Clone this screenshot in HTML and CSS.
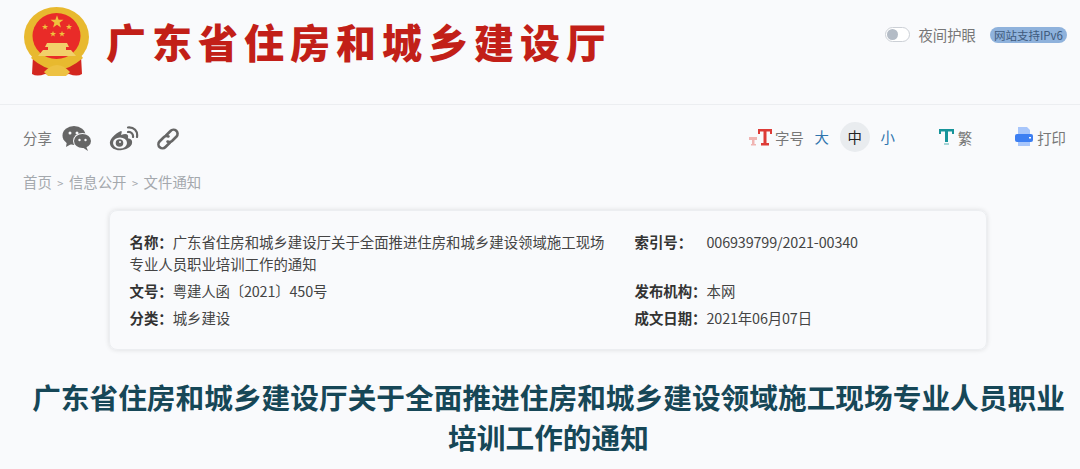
FILE: index.html
```html
<!DOCTYPE html>
<html lang="zh-CN">
<head>
    <meta charset="UTF-8">
    <title>广东省住房和城乡建设厅</title>
    <link rel="stylesheet" href="styles.css">
</head>
<body>

    <header class="site-header">
        <div class="brand">
            <!-- 国徽 -->
            <svg class="emblem" width="68" height="72" viewBox="0 0 68 72">
                <defs>
                    <path id="star" d="M0 -5 L1.200 -1.600 H4.800 L1.900 0.600 L2.900 4 L0 2 L-2.900 4 L-1.900 0.600 L-4.800 -1.600 H-1.200 Z"/>
                </defs>
                <path d="M10 50 L9 68 Q14 71 22 68 L34 70 L46 68 Q54 71 59 68 L58 50 Z" fill="#d3261f"/>
                <ellipse cx="33.500" cy="31" rx="32.500" ry="30" fill="#e8b92f"/>
                <ellipse cx="33.500" cy="30" rx="24" ry="23" fill="#e92b28"/>
                <g fill="#efc23d">
                    <use href="#star" transform="translate(34 16) scale(1.350)"/>
                    <use href="#star" transform="translate(22 21) scale(0.650)"/>
                    <use href="#star" transform="translate(46 21) scale(0.650)"/>
                    <use href="#star" transform="translate(30 28) scale(0.650)"/>
                    <use href="#star" transform="translate(39 28) scale(0.650)"/>
                </g>
                <path d="M24 37 H44 L46 41 H43 V44 H48 L53 50 H15 L20 44 H25 V41 H22 Z" fill="#f2d06a"/>
                <path d="M11 48 Q33 66 57 48 L60 52 Q46 64 34 64 Q22 64 8 52 Z" fill="#e8b92f"/>
                <path d="M21 66 Q34 52 47 66 L43 70 H25 Z" fill="#edc143"/>
            </svg>
            <div class="site-name">广东省住房和城乡建设厅</div>
        </div>
        <div class="header-tools">
            <span class="switch"><span class="switch-knob"></span></span>
            <span class="night-text">夜间护眼</span>
            <span class="ipv6">网站支持IPv6</span>
        </div>
    </header>

    <div class="tool-bar">
        <div class="share">
            <span class="share-label">分享</span>
            <svg class="share-icon" width="30" height="26" viewBox="0 0 30 26">
                <ellipse cx="12" cy="9.500" rx="11.500" ry="9.500" fill="#666"/>
                <path d="M5 15 L4 21 L11 17 Z" fill="#666"/>
                <ellipse cx="20.500" cy="15" rx="9.500" ry="8" fill="#f9fafc"/>
                <ellipse cx="20.500" cy="15" rx="8.500" ry="7" fill="#666"/>
                <path d="M24 20 L26 25 L20 21 Z" fill="#666"/>
                <circle cx="8" cy="7" r="1.500" fill="#f9fafc"/>
                <circle cx="15" cy="7" r="1.500" fill="#f9fafc"/>
                <circle cx="17.500" cy="14" r="1.200" fill="#f9fafc"/>
                <circle cx="23.500" cy="14" r="1.200" fill="#f9fafc"/>
            </svg>
            <svg class="share-icon" width="30" height="26" viewBox="0 0 30 26">
                <path d="M12 5 C5 8 0 14 1 18 C2 23 8 25 13 24 C19 23 24 20 23 15 C22 12 19 13 19 12 C20 8 17 7 12 9 C13 6 13 5 12 5Z" fill="#666"/>
                <ellipse cx="11" cy="17" rx="7" ry="5.500" fill="#f9fafc"/>
                <circle cx="10.500" cy="17" r="3.800" fill="#666"/>
                <circle cx="11" cy="16" r="1" fill="#f9fafc"/>
                <path d="M19 1.500 C25 1 29 5 28 11 M19 6 C22 5.500 24.500 8 24 11" fill="none" stroke="#666" stroke-width="2.200" stroke-linecap="round"/>
            </svg>
            <svg class="share-icon" width="24" height="24" viewBox="0 0 24 24">
                <path d="M10 8.500 L14.500 4 A4 4 0 0 1 20.500 9.500 L16 14 A4 4 0 0 1 11.500 14.500" fill="none" stroke="#666" stroke-width="2.600" stroke-linecap="round"/>
                <path d="M14 15.500 L9.500 20 A4 4 0 0 1 3.500 14.500 L8 10 A4 4 0 0 1 12.500 9.500" fill="none" stroke="#666" stroke-width="2.600" stroke-linecap="round"/>
            </svg>
        </div>
        <div class="page-tools">
            <svg class="tool-icon" width="23" height="17" viewBox="0 0 23 17">
                <path d="M0 8 H8 V11 H5.500 V15 H7 V16.500 H2 V15 H3 V11 H0 Z" fill="#f0b4b2"/>
                <path d="M9 0 H23 V5 H21 V2.500 H17.500 V14 H20 V16.500 H12 V14 H14.500 V2.500 H11 V5 H9 Z" fill="#dd3b37"/>
            </svg>
            <span class="tool-text">字号</span>
            <span class="size-btn">大</span>
            <span class="size-btn active">中</span>
            <span class="size-btn">小</span>
            <span class="fan-tool">
                <svg width="15" height="17" viewBox="0 0 15 17">
                    <path d="M0 0 H15 V5 H13 V2.500 H9 V13 H6 V2.500 H2 V5 H0 Z" fill="#17949a"/>
                    <path d="M5 14 H10 V16 H5 Z" fill="#a5d5d7"/>
                </svg>
                <span class="tool-text">繁</span>
            </span>
            <span class="print-tool">
                <svg width="18" height="20" viewBox="0 0 18 20">
                    <path d="M3 0 H12 L15 3 V8 H3 Z" fill="#a8c6fb"/>
                    <path d="M3 14 H15 V19 H3 Z" fill="#a8c6fb"/>
                    <rect y="7" width="18" height="8" rx="2" fill="#3d7ff2"/>
                    <rect x="14" y="10" width="2" height="1.500" fill="#fff"/>
                </svg>
                <span class="tool-text">打印</span>
            </span>
        </div>
    </div>

    <div class="crumbs">
        <span>首页</span><i>&gt;</i><span>信息公开</span><i>&gt;</i><span>文件通知</span>
    </div>

    <div class="info-card">
        <div class="info-item"><b>名称：</b>广东省住房和城乡建设厅关于全面推进住房和城乡建设领域施工现场专业人员职业培训工作的通知</div>
        <div class="info-item"><b class="key-long">索引号：</b><span class="num">006939799/2021-00340</span></div>
        <div class="info-item"><b>文号：</b><span class="num">粤建人函〔2021〕450号</span></div>
        <div class="info-item"><b class="key-long">发布机构：</b>本网</div>
        <div class="info-item"><b>分类：</b>城乡建设</div>
        <div class="info-item"><b class="key-long">成文日期：</b><span class="num">2021年06月07日</span></div>
    </div>

    <h1 class="article-title">广东省住房和城乡建设厅关于全面推进住房和城乡建设领域施工现场专业人员职业培训工作的通知</h1>

</body>
</html>
```

FILE: styles.css
```css
* {
    box-sizing: border-box;
}

html, body {
    height: 469px;
    overflow: hidden;
}

body {
    margin: 0;
    font-family: "Noto Sans CJK SC", "Noto Sans", sans-serif;
    font-size: 14.4px;
    color: #444;
    background-color: #f9fafc;
}

.site-header {
    height: 105px;
    padding: 6px 13px 0 23px;
    display: flex;
    justify-content: space-between;
    border-bottom: 1px solid #eceef1;
}

.brand {
    display: flex;
    align-items: flex-start;
}

.emblem {
    flex: none;
}

.site-name {
    margin: 6px 0 0 15px;
    font-size: 40px;
    line-height: 58px;
    font-weight: 900;
    letter-spacing: 6px;
    color: #c21f18;
    white-space: nowrap;
}

.header-tools {
    height: 57px;
    display: flex;
    align-items: center;
}

.switch {
    width: 25px;
    height: 15px;
    padding: 1px;
    border: 1px solid #ccd0d6;
    border-radius: 8px;
    background-color: #fff;
}

.switch-knob {
    display: block;
    width: 11px;
    height: 11px;
    border-radius: 50%;
    background-color: #b4bcc6;
}

.night-text {
    margin-left: 8px;
    color: #777;
}

.ipv6 {
    margin-left: 14px;
    padding: 0 4px;
    height: 16px;
    line-height: 16px;
    font-size: 11.500px;
    color: #3e5a7c;
    border-radius: 8px;
    background-color: #8fb2dc;
}

.tool-bar {
    height: 64px;
    padding: 0 14px 0 23px;
    display: flex;
    justify-content: space-between;
    align-items: center;
}

.share, .page-tools, .fan-tool, .print-tool {
    display: flex;
    align-items: center;
}

.share-label {
    margin-right: 10px;
    color: #777;
}

.share-icon {
    margin: 3px 17px 0 0;
}

.tool-text {
    color: #777;
}

.page-tools .tool-icon {
    margin-right: 3px;
}

.size-btn {
    width: 30px;
    height: 30px;
    margin-left: 3px;
    line-height: 30px;
    text-align: center;
    color: #2f74ad;
    border-radius: 50%;
}

.size-btn.active {
    color: #222;
    background-color: #e9ecef;
}

.fan-tool {
    margin-left: 36px;
}

.fan-tool .tool-text {
    margin-left: 4px;
}

.print-tool {
    margin-left: 43px;
}

.print-tool .tool-text {
    margin-left: 4px;
}

.crumbs {
    line-height: 26px;
    padding-left: 23px;
    color: #a4a8ad;
}

.crumbs i {
    margin: 0 5.500px;
    font-size: 11px;
    font-style: normal;
}

.info-card {
    width: 878px;
    margin: 14px 0 0 109px;
    padding: 20px 20px 15px 19.500px;
    display: grid;
    grid-template-columns: 505px 1fr;
    border: 1px solid #eceef1;
    border-radius: 8px;
    box-shadow: 0 0 5px rgba(0, 0, 0, 0.12);
}

.info-item {
    padding: 0 30px 5px 0;
    line-height: 22px;
    color: #444;
}

.info-item b {
    font-weight: 700;
    white-space: nowrap;
    color: #333;
}

.info-item .key-long {
    display: inline-block;
    width: 72px;
}

.num {
    letter-spacing: -0.150px;
}

.article-title {
    margin: 27px 0 0;
    padding: 0 7px 0 24px;
    font-size: 28.700px;
    line-height: 40px;
    font-weight: 700;
    text-align: center;
    color: #164757;
}
```
